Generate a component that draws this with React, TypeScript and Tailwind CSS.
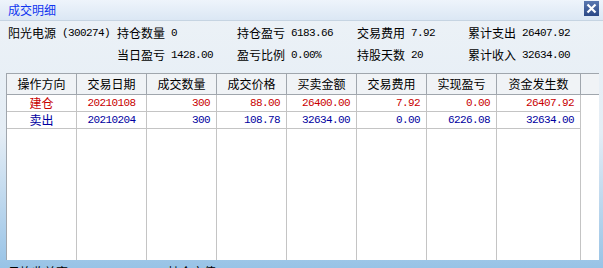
import React from "react";

const cjk = "font-['Noto_Sans_CJK_SC',sans-serif]";
const mono = "font-['Liberation_Mono','Noto_Sans_CJK_SC',monospace] text-[11px] tracking-[-0.6px]";

type Col = { title: string; width: string; align: "center" | "right" };

const columns: Col[] = [
  { title: "操作方向", width: "w-[70px]", align: "center" },
  { title: "交易日期", width: "w-[70px]", align: "center" },
  { title: "成交数量", width: "w-[70px]", align: "right" },
  { title: "成交价格", width: "w-[70px]", align: "right" },
  { title: "买卖金额", width: "w-[70px]", align: "right" },
  { title: "交易费用", width: "w-[70px]", align: "right" },
  { title: "实现盈亏", width: "w-[70px]", align: "right" },
  { title: "资金发生数", width: "w-[84px]", align: "right" },
];

const trades = [
  {
    color: "text-[#c80000]",
    cells: ["建仓", "20210108", "300", "88.00", "26400.00", "7.92", "0.00", "26407.92"],
  },
  {
    color: "text-[#0000a0]",
    cells: ["卖出", "20210204", "300", "108.78", "32634.00", "0.00", "6226.08", "32634.00"],
  },
];

function Stat({ label, value }: { label: string; value: string }) {
  return (
    <div className="flex items-center whitespace-pre">
      <span className={`${cjk} text-[12px]`}>{label}</span>
      <span className={mono}>{" " + value}</span>
    </div>
  );
}

export default function App() {
  return (
    <div className="relative flex h-[268px] w-[603px] flex-col overflow-hidden bg-gradient-to-b from-[#edf2f7] via-[#e4edf5] to-[#98c3e6] text-black">
      {/* title bar */}
      <div className="flex h-[21px] shrink-0 items-start justify-between border-b border-[#c6d4e2] bg-gradient-to-b from-[#eef4fb] to-[#dbe7f4]">
        <div className={`${cjk} pl-[8px] pt-[2px] text-[12px] leading-[16px] text-[#1036f0]`}>
          成交明细
        </div>
        <div className="mr-[4px] mt-[1px] flex h-[15px] w-[15px] items-center justify-center bg-gradient-to-b from-[#5a78b0] to-[#2b4886]">
          <svg width="11" height="11" viewBox="0 0 11 11">
            <path d="M1.5 1.5 L9.5 9.5 M9.5 1.5 L1.5 9.5" stroke="#fff" strokeWidth="2.2" />
          </svg>
        </div>
      </div>

      {/* summary */}
      <div className="grid shrink-0 grid-cols-[109px_120px_120px_111px_1fr] pb-[7px] pl-[8px] pt-[1px]">
        <div className="flex h-[22px] items-center whitespace-pre">
          <span className={`${cjk} text-[12px]`}>阳光电源</span>
          <span className={mono}> (300274)</span>
        </div>
        <div className="flex h-[22px] items-center">
          <Stat label="持仓数量" value="0" />
        </div>
        <div className="flex h-[22px] items-center">
          <Stat label="持仓盈亏" value="6183.66" />
        </div>
        <div className="flex h-[22px] items-center">
          <Stat label="交易费用" value="7.92" />
        </div>
        <div className="flex h-[22px] items-center">
          <Stat label="累计支出" value="26407.92" />
        </div>
        <div className="h-[22px]" />
        <div className="flex h-[22px] items-center">
          <Stat label="当日盈亏" value="1428.00" />
        </div>
        <div className="flex h-[22px] items-center">
          <Stat label="盈亏比例" value="0.00%" />
        </div>
        <div className="flex h-[22px] items-center">
          <Stat label="持股天数" value="20" />
        </div>
        <div className="flex h-[22px] items-center">
          <Stat label="累计收入" value="32634.00" />
        </div>
      </div>

      {/* trade table */}
      <div className="ml-[6px] mr-[4px] flex h-[187px] shrink-0 border-l border-t border-[#a0a6ad] bg-white">
        {columns.map((col, ci) => (
          <div key={col.title} className={`flex shrink-0 flex-col ${col.width}`}>
            <div
              className={`${cjk} flex h-[21px] items-center justify-center border-b border-r border-[#a0a6ad] bg-[#f0f3f6] text-[12px]`}
            >
              {col.title}
            </div>
            {trades.map((t, ri) => (
              <div
                key={ri}
                className={`flex h-[17px] items-center border-b border-r border-[#c4c4c4] ${t.color} ${
                  col.align === "center" ? "justify-center" : "justify-end pr-[6px]"
                }`}
              >
                <span className={ci === 0 ? `${cjk} text-[12px]` : mono}>{t.cells[ci]}</span>
              </div>
            ))}
            <div className="flex-1 border-r border-[#c4c4c4]" />
          </div>
        ))}
        <div className="flex flex-1 flex-col">
          <div className="h-[21px] border-b border-[#a0a6ad] bg-[#f0f3f6]" />
        </div>
      </div>

      {/* bottom strip, partly cut off by the window edge */}
      <div className={`${cjk} flex gap-[100px] overflow-hidden pl-[8px] pt-[5px] text-[12px] leading-[14px]`}>
        <span>日均收益率</span>
        <span>持仓市值</span>
      </div>
    </div>
  );
}
